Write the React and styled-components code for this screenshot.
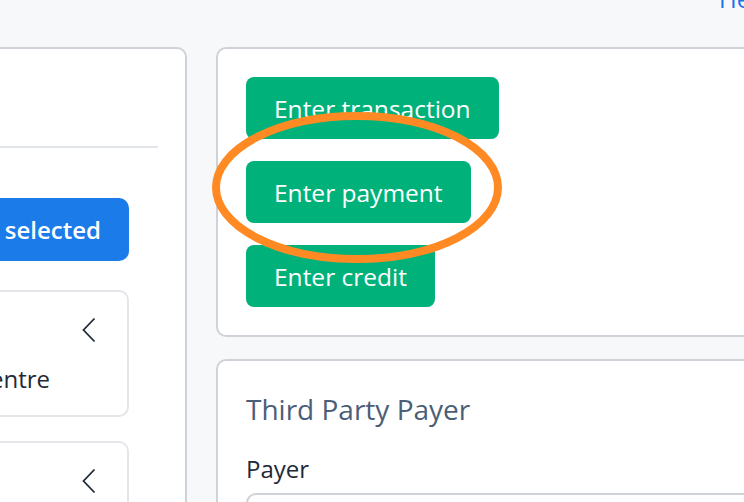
import React from "react";
import styled, { createGlobalStyle } from "styled-components";

const GlobalStyle = createGlobalStyle`
  body {
    margin: 0;
    background: #f7f8fa;
    font-family: "Open Sans", "Noto Sans", sans-serif;
    overflow: hidden;
  }
  * {
    box-sizing: border-box;
  }
`;

const actions = ["Enter transaction", "Enter payment", "Enter credit"];
const locations = ["Medical Centre", "Medical Centre"];

export default function App() {
  return (
    <Page>
      <GlobalStyle />
      <TopBar>
        <HelpLink href="#">Help</HelpLink>
      </TopBar>
      <Main>
        <LeftPanel>
          <LeftHeader>Invoices</LeftHeader>
          <Divider />
          <LeftBody>
            <SelectButton>Pay selected</SelectButton>
            <CardList>
              {locations.map((name, i) => (
                <LocationCard key={i}>
                  <CardTop>
                    <CardTitle>Clinic</CardTitle>
                    <Chevron viewBox="0 0 14 26">
                      <path d="M12.5 1.5 L1.5 13 L12.5 24.5" />
                    </Chevron>
                  </CardTop>
                  <CardText>{name}</CardText>
                </LocationCard>
              ))}
            </CardList>
          </LeftBody>
        </LeftPanel>
        <RightColumn>
          <Panel>
            <ActionList>
              {actions.map((a) => (
                <ActionButton key={a}>{a}</ActionButton>
              ))}
            </ActionList>
          </Panel>
          <Panel $tall>
            <PanelTitle>Third Party Payer</PanelTitle>
            <FieldLabel>Payer</FieldLabel>
            <Input />
          </Panel>
        </RightColumn>
      </Main>
      <Highlight viewBox="0 0 290 151">
        <ellipse cx="145" cy="75.5" rx="141" ry="71.5" />
      </Highlight>
    </Page>
  );
}

const Page = styled.div`
  position: relative;
  width: 744px;
  height: 502px;
  overflow: hidden;
`;

const TopBar = styled.div`
  height: 47px;
  display: flex;
`;

const HelpLink = styled.a`
  margin-left: 719px;
  margin-top: -17px;
  font-size: 24px;
  line-height: 32px;
  color: #1a73e8;
  text-decoration: none;
  white-space: nowrap;
`;

const Main = styled.div`
  display: flex;
  align-items: flex-start;
  gap: 29px;
  margin-left: -206px;
`;

const LeftPanel = styled.div`
  flex: 0 0 393px;
  background: #fff;
  border: 2px solid #cfd2d8;
  border-radius: 10px;
  padding: 0 27px;
`;

const LeftHeader = styled.div`
  height: 97px;
  display: flex;
  align-items: center;
  font-size: 24px;
  color: #1f2937;
`;

const Divider = styled.div`
  height: 2px;
  background: #e1e4e8;
`;

const LeftBody = styled.div`
  display: flex;
  flex-direction: column;
  padding: 50px 29px 0;
  gap: 29px;
`;

const SelectButton = styled.button`
  align-self: flex-end;
  height: 63px;
  padding: 0 28px;
  border: none;
  border-radius: 10px;
  background: #1a7be9;
  color: #fff;
  font-family: inherit;
  font-size: 24px;
  font-weight: 600;
  white-space: nowrap;
`;

const CardList = styled.div`
  display: flex;
  flex-direction: column;
  gap: 24px;
`;

const LocationCard = styled.div`
  height: 127px;
  background: #fff;
  border: 2px solid #e4e6ea;
  border-radius: 10px;
  padding: 26px 31px 0 28px;
`;

const CardTop = styled.div`
  display: flex;
  justify-content: space-between;
  align-items: center;
  height: 24px;
`;

const CardTitle = styled.span`
  font-size: 24px;
  color: #1f2937;
`;

const Chevron = styled.svg`
  width: 14px;
  height: 26px;
  fill: none;
  stroke: #1f2937;
  stroke-width: 1.8;
`;

const CardText = styled.div`
  margin-top: 19px;
  font-size: 24px;
  line-height: 36px;
  color: #1f2937;
  white-space: nowrap;
`;

const RightColumn = styled.div`
  flex: 0 0 620px;
  display: flex;
  flex-direction: column;
  gap: 22px;
`;

const Panel = styled.div`
  background: #fff;
  border: 2px solid #cfd2d8;
  border-radius: 10px;
  padding: ${(p) => (p.$tall ? "32px 28px 28px" : "28px")};
`;

const ActionList = styled.div`
  display: flex;
  flex-direction: column;
  align-items: flex-start;
  gap: 22px;
`;

const ActionButton = styled.button`
  height: 62px;
  padding: 0 28px;
  border: none;
  border-radius: 8px;
  background: #00b27a;
  color: #fff;
  font-family: inherit;
  font-size: 24.5px;
  font-weight: 400;
  white-space: nowrap;
`;

const PanelTitle = styled.h2`
  margin: 0;
  font-size: 28px;
  line-height: 1.2;
  font-weight: 400;
  color: #4b5e78;
`;

const FieldLabel = styled.label`
  display: block;
  margin-top: 24px;
  font-size: 24px;
  line-height: 36px;
  color: #1f2a37;
`;

const Input = styled.div`
  margin-top: 6px;
  height: 60px;
  border: 2px solid #cfd2d8;
  border-radius: 10px;
`;

const Highlight = styled.svg`
  position: absolute;
  left: 212px;
  top: 112px;
  width: 290px;
  height: 151px;
  fill: none;
  stroke: #ff8a24;
  stroke-width: 8;
  pointer-events: none;
`;
